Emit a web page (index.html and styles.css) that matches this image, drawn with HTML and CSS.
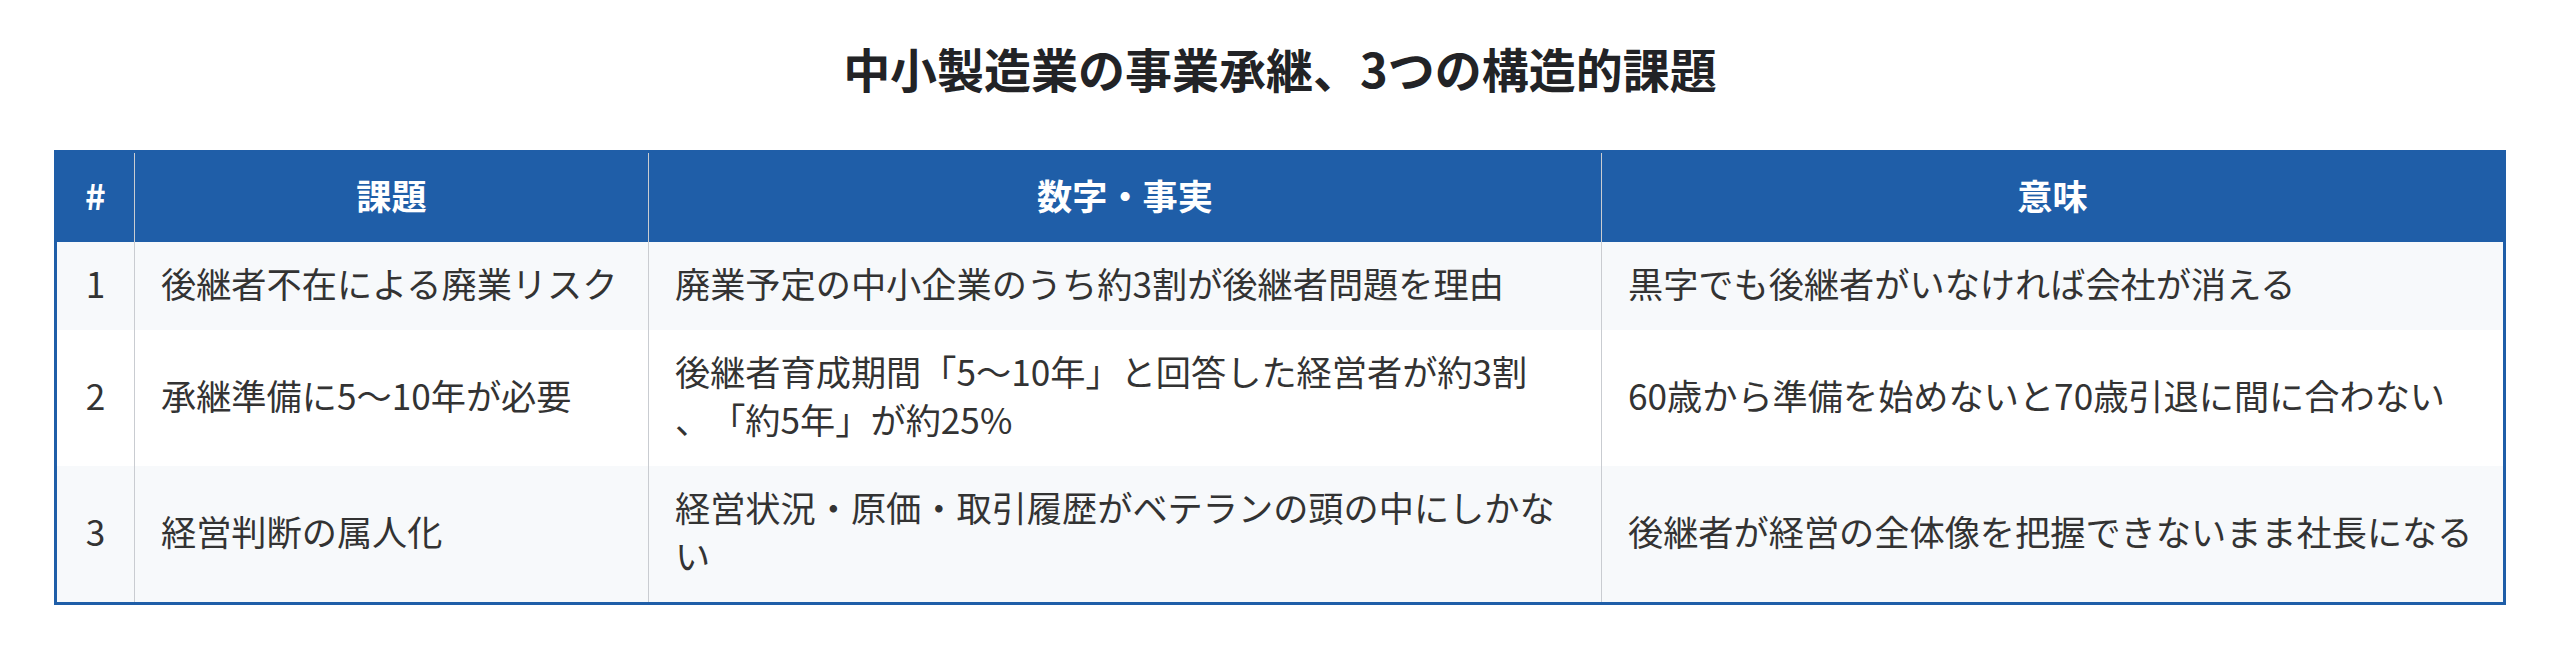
FILE: index.html
```html
<!DOCTYPE html>
<html lang="ja">
<head>
<meta charset="utf-8">
<title>中小製造業の事業承継、3つの構造的課題</title>
<link rel="stylesheet" href="styles.css">
</head>
<body>
<main class="page">
  <h1 class="title">中小製造業の事業承継、3つの構造的課題</h1>
  <table class="issues">
    <colgroup>
      <col class="c-num">
      <col class="c-issue">
      <col class="c-fact">
      <col class="c-mean">
    </colgroup>
    <thead>
      <tr>
        <th class="num">#</th>
        <th>課題</th>
        <th>数字・事実</th>
        <th>意味</th>
      </tr>
    </thead>
    <tbody>
      <tr>
        <td class="num">1</td>
        <td>後継者不在による廃業リスク</td>
        <td>廃業予定の中小企業のうち約3割が後継者問題を理由</td>
        <td>黒字でも後継者がいなければ会社が消える</td>
      </tr>
      <tr>
        <td class="num">2</td>
        <td>承継準備に5〜10年が必要</td>
        <td>後継者育成期間「5〜10年」と回答した経営者が約3割<br>、「約5年」が約25%</td>
        <td>60歳から準備を始めないと70歳引退に間に合わない</td>
      </tr>
      <tr>
        <td class="num">3</td>
        <td>経営判断の属人化</td>
        <td>経営状況・原価・取引履歴がベテランの頭の中にしかな<br>い</td>
        <td>後継者が経営の全体像を把握できないまま社長になる</td>
      </tr>
    </tbody>
  </table>
</main>
</body>
</html>
```

FILE: styles.css
```css
html, body {
  margin: 0;
  padding: 0;
  background: #ffffff;
}

.page {
  padding: 39px 54px 0;
  font-family: "Noto Sans CJK JP", "Noto Sans", sans-serif;
  color: #333333;
  text-spacing-trim: space-all;
}

.title {
  margin: 0 0 53px;
  font-size: 47px;
  line-height: 58px;
  font-weight: 700;
  color: #222326;
  text-align: center;
}

.issues {
  width: 2452px;
  table-layout: fixed;
  border-collapse: separate;
  border-spacing: 0;
  border: 3px solid #1f5ea8;
  font-size: 35.2px;
  line-height: 48px;
}

.c-num { width: 77px; }
.c-issue { width: 514px; }
.c-fact { width: 953px; }
.c-mean { width: 902px; }

.issues th,
.issues td {
  box-sizing: border-box;
  padding: 17px 26px 23px;
  vertical-align: middle;
  text-align: left;
  border-left: 1px solid #c9ccd1;
}

.issues th:first-child,
.issues td:first-child {
  border-left: none;
}

.issues thead th {
  background: #1f5ea8;
  color: #ffffff;
  font-weight: 700;
  text-align: center;
  padding-top: 18px;
  padding-bottom: 23px;
}

.issues td {
  color: #333333;
  font-weight: 400;
}

.issues tbody tr:nth-child(odd) td {
  background: #f7f9fb;
}

.issues tbody tr:nth-child(even) td {
  background: #ffffff;
}

.issues .num {
  text-align: center;
  padding-left: 0;
  padding-right: 0;
}
```
